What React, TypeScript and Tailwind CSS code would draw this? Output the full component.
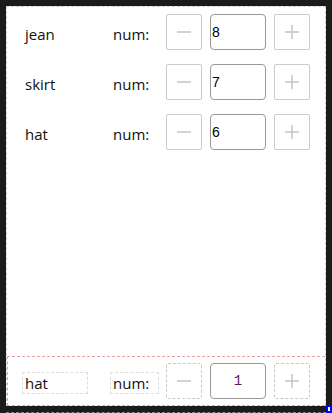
import React from "react";

const Minus = () => (
  <svg width="16" height="16" viewBox="0 0 16 16">
    <line x1="1" y1="8" x2="15" y2="8" stroke="#c4c4c4" strokeWidth="1.5" />
  </svg>
);
const Plus = () => (
  <svg width="16" height="16" viewBox="0 0 16 16">
    <line x1="1" y1="8" x2="15" y2="8" stroke="#c4c4c4" strokeWidth="1.5" />
    <line x1="8" y1="1" x2="8" y2="15" stroke="#c4c4c4" strokeWidth="1.5" />
  </svg>
);

const items = [
  { name: "jean", num: 8 },
  { name: "skirt", num: 7 },
  { name: "hat", num: 6 },
];

export default function App() {
  return (
    <div className="relative h-[413px] w-[332px] bg-[#1b1b1b] pt-[6px] pl-[6px]" style={{ fontFamily: '"Open Sans", sans-serif' }}>
      <div className="flex h-[400px] w-[320px] flex-col border-l border-r border-t border-dashed border-[#cfcfcf] bg-white">
        <div className="flex flex-1 flex-col">
          {items.map((it) => (
            <div key={it.name} className="flex h-[50px] items-center pl-[15px]">
              <div className="mt-[3px] h-[22px] w-[66px] border border-transparent px-[2px] text-[15px] leading-[20px] text-[#111111]">
                {it.name}
              </div>
              <div className="ml-[22px] mt-[3px] h-[22px] w-[49px] border border-transparent px-[2px] text-[15px] leading-[20px] text-[#111111]">
                num:
              </div>
              <div className="ml-[7px] flex h-9 w-9 items-center justify-center rounded-[2px] border border-[#cccccc]">
                <Minus />
              </div>
              <div className="ml-2 flex h-9 w-14 items-center rounded-[4px] border border-[#999999] pl-[1px] text-[14px] text-black" style={{ fontFamily: '"Liberation Sans", sans-serif' }}>
                {it.num}
              </div>
              <div className="ml-2 flex h-9 w-9 items-center justify-center rounded-[2px] border border-[#cccccc]">
                <Plus />
              </div>
            </div>
          ))}
        </div>
        <div className="flex h-[50px] items-center border-b border-l border-t border-dashed border-[#e9a3a3] pl-[14px]">
          <div className="mt-[3px] h-[22px] w-[66px] border border-dashed border-[#dcdcdc] px-[2px] text-[15px] leading-[20px] text-[#111111]">
            hat
          </div>
          <div className="ml-[22px] mt-[3px] h-[22px] w-[49px] border border-dashed border-[#dcdcdc] px-[2px] text-[15px] leading-[20px] text-[#111111]">
            num:
          </div>
          <div className="ml-[7px] flex h-9 w-9 items-center justify-center rounded-[2px] border border-dashed border-[#c8c8c8]">
            <Minus />
          </div>
          <div className="ml-2 flex h-9 w-14 items-center justify-center rounded-[4px] border border-[#999999] text-[14px] text-[#6b0f6b]" style={{ fontFamily: '"Liberation Mono", monospace' }}>
            1
          </div>
          <div className="ml-2 flex h-9 w-9 items-center justify-center rounded-[2px] border border-dashed border-[#c8c8c8]">
            <Plus />
          </div>
        </div>
      </div>
      <div className="mt-[6px] w-[320px] border-t border-dashed border-[#8a8a8a]" />
      <div className="absolute bottom-0 right-0 h-[8px] w-[6px] border-2 border-[#0000ff] bg-white" />
    </div>
  );
}
